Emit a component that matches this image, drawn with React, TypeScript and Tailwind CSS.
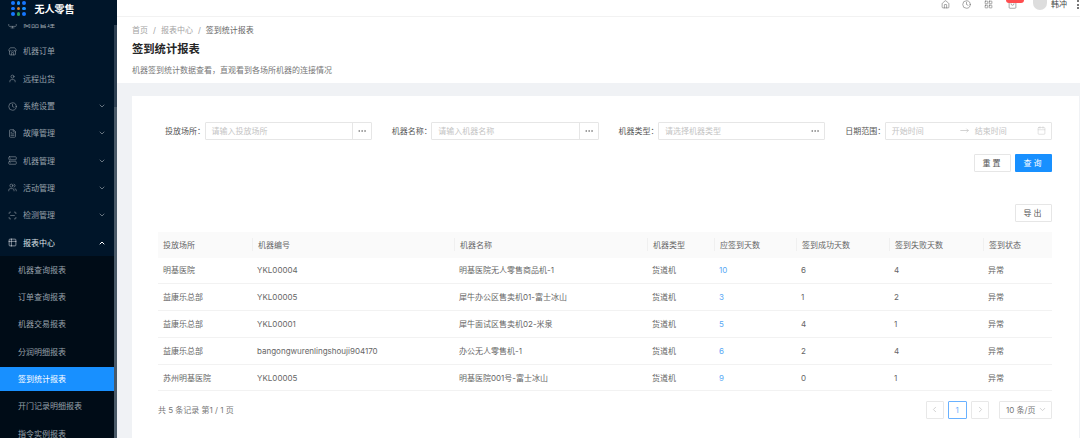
import React from "react";
import { ChevronDown, ChevronUp, ChevronLeft, ChevronRight, Home, Clock, LayoutGrid, ShoppingBag, MoveRight, Calendar, User, Monitor, FileText, Server, Users, ScanLine, Table2, Ellipsis, Store } from "lucide-react";

const font = "font-['Inter','Noto_Sans_CJK_SC',sans-serif]";

const menu = [
  { label: "机器订单", icon: Store },
  { label: "远程出货", icon: User },
  { label: "系统设置", icon: Clock, arrow: true },
  { label: "故障管理", icon: FileText, arrow: true },
  { label: "机器管理", icon: Server, arrow: true },
  { label: "活动管理", icon: Users, arrow: true },
  { label: "检测管理", icon: ScanLine, arrow: true },
];
const sub = ["机器查询报表", "订单查询报表", "机器交易报表", "分润明细报表", "签到统计报表", "开门记录明细报表", "指令实例报表"];
const cols = ["投放场所", "机器编号", "机器名称", "机器类型", "应签到天数", "签到成功天数", "签到失败天数", "签到状态"];
const rows = [
  ["明基医院", "YKL00004", "明基医院无人零售商品机-1", "货道机", "10", "6", "4", "异常"],
  ["益康乐总部", "YKL00005", "犀牛办公区售卖机01-富士冰山", "货道机", "3", "1", "2", "异常"],
  ["益康乐总部", "YKL00001", "犀牛面试区售卖机02-米泉", "货道机", "5", "4", "1", "异常"],
  ["益康乐总部", "bangongwurenlingshouji904170", "办公无人零售机-1", "货道机", "6", "2", "4", "异常"],
  ["苏州明基医院", "YKL00005", "明基医院001号-富士冰山", "货道机", "9", "0", "1", "异常"],
];
const gridCols = "grid grid-cols-[94px_202px_193px_67px_82px_93px_94px_69px]";

function Logo() {
  const colors = ["#1677ff", "#1890ff", "#1677ff", "#1677ff", "#d9822b", "#1890ff", "#1677ff", "#2f9e5b", "#1677ff"];
  return (
    <div className="grid grid-cols-3 gap-[2px] w-[14.5px]">
      {colors.map((c, i) => (
        <span key={i} className="w-[3.5px] h-[3.5px] rounded-full" style={{ background: c }} />
      ))}
    </div>
  );
}

function Field({ label, placeholder, addon }: { label: string; placeholder: string; addon?: boolean }) {
  return (
    <div className="flex items-center">
      <span className="w-[39.5px] shrink-0 text-[8px] text-[#555] whitespace-nowrap">{label}</span>
      <div className="flex-1 h-[17.5px] flex items-center border border-[#e6e6e6] rounded-[1px] bg-white">
        <span className="flex-1 pl-[6px] text-[8px] text-[#c4c4c4] whitespace-nowrap">{placeholder}</span>
        <span className={`w-[19px] h-full flex items-center justify-center text-[#777] ${addon ? "border-l border-[#e6e6e6]" : ""}`}>
          <Ellipsis size={10} strokeWidth={1.75} />
        </span>
      </div>
    </div>
  );
}

export default function App() {
  return (
    <div className={`${font} w-[1080px] h-[438px] overflow-hidden flex bg-[#f0f2f5]`}>
      <aside className="w-[114px] shrink-0 h-full bg-[#001529] flex flex-col overflow-hidden">
        <div className="relative z-10 h-[24px] shrink-0 bg-[#001529] flex items-start pl-[11px] pt-[1px] gap-[9px]">
          <Logo />
          <span className="text-[10px] leading-[16px] font-bold text-white">无人零售</span>
        </div>
        <div className="-mt-[13.5px] flex flex-col">
          <div className="h-[27.3px] flex items-center pl-[8px] gap-[6px] text-[8px] text-[#98a1aa]">
            <Monitor size={9} strokeWidth={1.5} />
            <span>商品管理</span>
          </div>
          {menu.map((m) => {
            const Icon = m.icon;
            return (
              <div key={m.label} className="h-[27.3px] flex items-center pl-[8px] pr-[8px] gap-[6px] text-[8px] text-[#98a1aa]">
                <Icon size={9} strokeWidth={1.5} />
                <span className="flex-1">{m.label}</span>
                {m.arrow && <ChevronDown size={8} />}
              </div>
            );
          })}
          <div className="h-[27.3px] flex items-center pl-[8px] pr-[8px] gap-[6px] text-[8px] text-[#dfe3e7]">
            <Table2 size={9} strokeWidth={1.5} />
            <span className="flex-1">报表中心</span>
            <ChevronUp size={8} strokeWidth={3} className="text-white" />
          </div>
          <div className="bg-[#000c17] flex flex-col">
            {sub.map((s) => (
              <div
                key={s}
                className={`flex items-center pl-[18px] text-[8px] ${
                  s === "签到统计报表" ? "bg-[#1890ff] text-white my-[2.1px] h-[23.1px]" : "h-[27.3px] text-[#98a1aa]"
                }`}
              >
                {s}
              </div>
            ))}
          </div>
        </div>
      </aside>
      <div className="w-[3px] shrink-0 flex flex-col bg-[#4a5a68]">
        <div className="h-[25px] bg-[#001529]" />
        <div className="h-[82px] bg-[#2e4052]" />
      </div>
      <main className="flex-1 flex flex-col min-w-0">
        <header className="h-[17px] shrink-0 bg-white border-b border-[#f2f2f2] flex items-start justify-end text-[#666]">
          <div className="flex items-start pr-[1px]">
            <Home size={9} strokeWidth={1.5} className="mr-[12px]" />
            <Clock size={9} strokeWidth={1.5} className="mr-[13px]" />
            <LayoutGrid size={9} strokeWidth={1.5} className="mr-[15px]" />
            <span className="relative mr-[16px]">
              <ShoppingBag size={9} strokeWidth={1.5} />
              <span className="absolute -top-[1px] left-[-2px] w-[18px] h-[4px] rounded-b-[3px] bg-[#ff4d4f]" />
            </span>
            <span className="w-[14px] h-[10px] rounded-b-full bg-[#dddddd] mr-[4px]" />
            <span className="text-[8px] leading-[8px] text-[#444] mr-[10px]">韩冲</span>
            <span className="w-[2px] flex flex-col gap-[1.5px]">
              <span className="h-[2px] bg-[#777]" />
              <span className="h-[2px] bg-[#777]" />
              <span className="h-[2px] bg-[#777]" />
            </span>
          </div>
        </header>
        <section className="h-[66px] shrink-0 bg-white pl-[15px] pt-[7px]">
          <div className="flex gap-[5px] text-[8px] leading-[12px] text-[#a3a3a3]">
            <span>首页</span><span>/</span><span>报表中心</span><span>/</span><span className="text-[#666]">签到统计报表</span>
          </div>
          <h1 className="mt-[5px] text-[11.3px] leading-[16px] font-semibold text-[#262626]">签到统计报表</h1>
          <p className="mt-[7px] text-[8px] leading-[12px] text-[#777]">机器签到统计数据查看，直观看到各场所机器的连接情况</p>
        </section>
        <section className="flex-1 ml-[15px] mr-[1.5px] mt-[13px] bg-white pl-[26px] pr-[26.5px] min-h-0">
          <div className="pt-[26px] pl-[7px] grid grid-cols-4 gap-x-[20px]">
            <Field label="投放场所：" placeholder="请输入投放场所" addon />
            <Field label="机器名称：" placeholder="请输入机器名称" addon />
            <Field label="机器类型：" placeholder="请选择机器类型" />
            <div className="flex items-center">
              <span className="w-[39.5px] shrink-0 text-[8px] text-[#555] whitespace-nowrap">日期范围：</span>
              <div className="flex-1 h-[17.5px] flex items-center border border-[#e6e6e6] rounded-[1px] pl-[6px] pr-[5px] text-[8px] text-[#c4c4c4]">
                <span className="w-[68px]">开始时间</span>
                <MoveRight size={9} className="mr-[6px]" />
                <span className="flex-1">结束时间</span>
                <Calendar size={9} strokeWidth={1.25} />
              </div>
            </div>
          </div>
          <div className="mt-[14px] flex justify-end gap-[4px]">
            <button className="w-[37px] h-[18px] border border-[#e6e6e6] rounded-[1px] text-[8px] text-[#555] tracking-[2px]">重置</button>
            <button className="w-[37px] h-[18px] bg-[#1890ff] rounded-[1px] text-[8px] text-white tracking-[2px]">查询</button>
          </div>
          <div className="mt-[32px] flex justify-end">
            <button className="w-[37px] h-[18px] border border-[#e6e6e6] rounded-[1px] text-[8px] text-[#555] tracking-[2px]">导出</button>
          </div>
          <div className="mt-[10px] text-[8px]">
            <div className={`${gridCols} h-[26px] bg-[#fafafa] items-center text-[#666]`}>
              {cols.map((c, i) => (
                <div key={c} className={`h-[13px] flex items-center pl-[5px] ${i > 0 ? "border-l border-[#f0f0f0]" : ""}`}>{c}</div>
              ))}
            </div>
            {rows.map((r, ri) => (
              <div key={ri} className={`${gridCols} h-[26.8px] items-center border-b border-[#f2f2f2] text-[#666]`}>
                {r.map((c, i) => (
                  <div key={i} className={`pl-[5px] whitespace-nowrap ${i === 4 ? "text-[#5aa9f5]" : ""}`}>{c}</div>
                ))}
              </div>
            ))}
          </div>
          <div className="mt-[9.5px] flex items-center text-[8px] text-[#777]">
            <span className="flex-1">共 5 条记录 第1 / 1 页</span>
            <span className="w-[18px] h-[18px] border border-[#e8e8e8] rounded-[1px] flex items-center justify-center text-[#c4c4c4]"><ChevronLeft size={9} /></span>
            <span className="ml-[4.5px] w-[18.5px] h-[18px] border border-[#69b1ff] rounded-[1px] flex items-center justify-center text-[#69b1ff]">1</span>
            <span className="ml-[4.5px] w-[18px] h-[18px] border border-[#e8e8e8] rounded-[1px] flex items-center justify-center text-[#c4c4c4]"><ChevronRight size={9} /></span>
            <span className="ml-[10px] w-[53px] h-[18px] border border-[#e8e8e8] rounded-[1px] flex items-center justify-between pl-[6px] pr-[4px]">10 条/页<ChevronDown size={9} className="text-[#c4c4c4]" /></span>
          </div>
        </section>
      </main>
    </div>
  );
}
